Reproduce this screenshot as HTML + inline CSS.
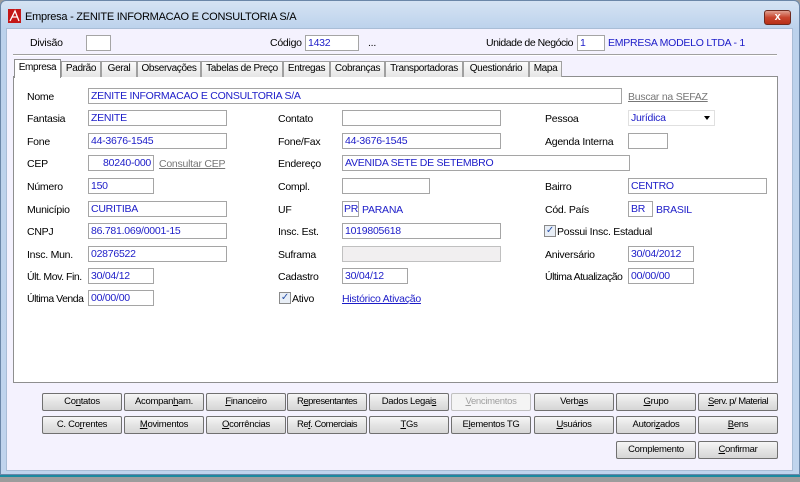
<!DOCTYPE html>
<html><head><meta charset="utf-8"><style>
*{box-sizing:border-box;margin:0;padding:0}
body{width:800px;height:482px;overflow:hidden;background:#9c9c9c;font-family:"Liberation Sans",sans-serif;font-size:10.5px;letter-spacing:-0.25px;color:#000;position:relative}
.a{position:absolute;white-space:nowrap}
.win{position:absolute;left:0;top:0;width:800px;height:475px;background:linear-gradient(#d5e3f3,#bcd2ec 28px,#c0d4ed);border:1px solid #6b87a8;border-radius:6px 6px 0 0}
.cl{position:absolute;left:6px;top:28px;width:787px;height:443px;background:#f4f2fe;border:1px solid #a9bdd6}
.in{position:absolute;height:16px;background:#fff;border:1px solid #a5a5a5;color:#1c1cc8;padding:1px 2px 0;line-height:13px;white-space:nowrap;overflow:hidden}
.lk{color:#1c1cc8}
.bt{position:absolute;width:80px;height:18px;border:1px solid #707070;border-radius:2px;background:linear-gradient(#f6f6f6,#e4e4e4 50%,#d6d6d6);font-size:9.5px;letter-spacing:-0.3px;text-align:center;line-height:16px;white-space:nowrap}
.tab{position:absolute;top:61px;height:16px;border:1px solid #a0a0a0;border-bottom:none;background:linear-gradient(#fbfbfb,#e5e5e5);font-size:10px;letter-spacing:-0.35px;line-height:14px;text-align:center;white-space:nowrap;overflow:hidden}
.cb{position:absolute;width:12px;height:12px;border:1px solid #8a8a8a;background:#e8eef6;color:#2a52a8;font-size:10px;line-height:10px;text-align:center}
</style></head><body>
<div class="win"></div>
<svg class="a" style="left:8px;top:9px" width="13" height="14"><rect width="13" height="14" fill="#c41818"/><path d="M2 12L7 2L11 12M4 8h5" stroke="#fff" stroke-width="1.3" fill="none"/></svg>
<div class="a" style="left:25px;top:11px;font-size:11px">Empresa - ZENITE INFORMACAO E CONSULTORIA S/A</div>
<div class="a" style="left:764px;top:10px;width:27px;height:15px;background:linear-gradient(#e0a090,#c8452e 50%,#b83018);border:1px solid #6e2a1e;border-radius:3px;color:#fff;font-weight:bold;text-align:center;line-height:13px;font-size:11px">x</div>
<div class="cl"></div>
<div class="a" style="left:30px;top:37px">Divisão</div><div class="in" style="left:86px;top:35px;width:25px"></div>
<div class="a" style="left:270px;top:37px">Código</div><div class="in" style="left:305px;top:35px;width:54px">1432</div>
<div class="a" style="left:368px;top:37px">...</div>
<div class="a" style="left:486px;top:37px;letter-spacing:-0.45px">Unidade de Negócio</div><div class="in" style="left:577px;top:35px;width:28px">1</div>
<div class="a lk" style="left:608px;top:37px">EMPRESA MODELO LTDA - 1</div>
<div class="a" style="left:13px;top:54px;width:764px;height:2px;border-top:1px solid #a0a0a0;border-bottom:1px solid #fff"></div>
<div class="a" style="left:13px;top:76px;width:765px;height:307px;background:#fff;border:1px solid #8e8f8f"></div>
<div class="tab" style="left:61px;width:40px">Padrão</div>
<div class="tab" style="left:101px;width:36px">Geral</div>
<div class="tab" style="left:137px;width:64px">Observações</div>
<div class="tab" style="left:201px;width:82px">Tabelas de Preço</div>
<div class="tab" style="left:283px;width:47px">Entregas</div>
<div class="tab" style="left:330px;width:55px">Cobranças</div>
<div class="tab" style="left:385px;width:78px">Transportadoras</div>
<div class="tab" style="left:463px;width:66px">Questionário</div>
<div class="tab" style="left:529px;width:33px">Mapa</div>
<div class="tab" style="left:14px;top:59px;height:19px;width:47px;background:#fff;line-height:15px;border-color:#8e8f8f">Empresa</div>

<div class="a" style="left:27px;top:91px">Nome</div><div class="in" style="left:88px;top:88px;width:534px">ZENITE INFORMACAO E CONSULTORIA S/A</div>
<div class="a" style="left:628px;top:91px;color:#777;text-decoration:underline">Buscar na SEFAZ</div>

<div class="a" style="left:27px;top:113px">Fantasia</div><div class="in" style="left:88px;top:110px;width:139px">ZENITE</div>
<div class="a" style="left:27px;top:136px">Fone</div><div class="in" style="left:88px;top:133px;width:139px">44-3676-1545</div>
<div class="a" style="left:27px;top:158px">CEP</div><div class="in" style="left:88px;top:155px;width:66px;text-align:right">80240-000</div>
<div class="a" style="left:159px;top:158px;color:#777;text-decoration:underline">Consultar CEP</div>
<div class="a" style="left:27px;top:181px">Número</div><div class="in" style="left:88px;top:178px;width:66px">150</div>
<div class="a" style="left:27px;top:204px">Município</div><div class="in" style="left:88px;top:201px;width:139px">CURITIBA</div>
<div class="a" style="left:27px;top:226px">CNPJ</div><div class="in" style="left:88px;top:223px;width:139px">86.781.069/0001-15</div>
<div class="a" style="left:27px;top:249px">Insc. Mun.</div><div class="in" style="left:88px;top:246px;width:139px">02876522</div>
<div class="a" style="left:27px;top:271px;letter-spacing:-0.45px">Últ. Mov. Fin.</div><div class="in" style="left:88px;top:268px;width:66px">30/04/12</div>
<div class="a" style="left:27px;top:293px;letter-spacing:-0.5px">Última Venda</div><div class="in" style="left:88px;top:290px;width:66px">00/00/00</div>

<div class="a" style="left:278px;top:113px">Contato</div><div class="in" style="left:342px;top:110px;width:159px"></div>
<div class="a" style="left:278px;top:136px">Fone/Fax</div><div class="in" style="left:342px;top:133px;width:159px">44-3676-1545</div>
<div class="a" style="left:278px;top:158px">Endereço</div><div class="in" style="left:342px;top:155px;width:288px">AVENIDA SETE DE SETEMBRO</div>
<div class="a" style="left:278px;top:181px">Compl.</div><div class="in" style="left:342px;top:178px;width:88px"></div>
<div class="a" style="left:278px;top:204px">UF</div><div class="in" style="left:342px;top:201px;width:17px;padding:1px 1px 0">PR</div><div class="a lk" style="left:362px;top:204px">PARANA</div>
<div class="a" style="left:278px;top:226px">Insc. Est.</div><div class="in" style="left:342px;top:223px;width:159px">1019805618</div>
<div class="a" style="left:278px;top:249px">Suframa</div><div class="in" style="left:342px;top:246px;width:159px;background:#f1eff0;border-color:#c0c0c0"></div>
<div class="a" style="left:278px;top:271px">Cadastro</div><div class="in" style="left:342px;top:268px;width:66px">30/04/12</div>
<div class="cb" style="left:279px;top:292px">✓</div><div class="a" style="left:292px;top:293px">Ativo</div>
<div class="a lk" style="left:342px;top:293px;text-decoration:underline">Histórico Ativação</div>

<div class="a" style="left:545px;top:113px">Pessoa</div><div class="in" style="left:628px;top:110px;width:87px;border-color:#e0e0e0">Jurídica</div><div class="a" style="left:704px;top:116px;width:0;height:0;border:3px solid transparent;border-top:4px solid #000;border-bottom:none"></div>
<div class="a" style="left:545px;top:136px">Agenda Interna</div><div class="in" style="left:628px;top:133px;width:40px"></div>
<div class="a" style="left:545px;top:181px">Bairro</div><div class="in" style="left:628px;top:178px;width:139px">CENTRO</div>
<div class="a" style="left:545px;top:204px">Cód. País</div><div class="in" style="left:628px;top:201px;width:25px">BR</div><div class="a lk" style="left:656px;top:204px">BRASIL</div>
<div class="cb" style="left:544px;top:225px">✓</div><div class="a" style="left:557px;top:226px">Possui Insc. Estadual</div>
<div class="a" style="left:545px;top:249px">Aniversário</div><div class="in" style="left:628px;top:246px;width:66px">30/04/2012</div>
<div class="a" style="left:545px;top:271px;letter-spacing:-0.5px">Última Atualização</div><div class="in" style="left:628px;top:268px;width:66px">00/00/00</div>

<div class="bt" style="left:42px;top:393px">Co<u>n</u>tatos</div>
<div class="bt" style="left:124px;top:393px">Acompan<u>h</u>am.</div>
<div class="bt" style="left:206px;top:393px"><u>F</u>inanceiro</div>
<div class="bt" style="left:287px;top:393px;letter-spacing:-0.5px">R<u>e</u>presentantes</div>
<div class="bt" style="left:369px;top:393px">Dados Legai<u>s</u></div>
<div class="bt" style="left:451px;top:393px;color:#a0a0a0;border-color:#c0c0c0;background:#f4f4f4"><u>V</u>encimentos</div>
<div class="bt" style="left:534px;top:393px">Verb<u>a</u>s</div>
<div class="bt" style="left:616px;top:393px"><u>G</u>rupo</div>
<div class="bt" style="left:698px;top:393px;letter-spacing:-0.5px"><u>S</u>erv. p/ Material</div>
<div class="bt" style="left:42px;top:416px">C. Co<u>r</u>rentes</div>
<div class="bt" style="left:124px;top:416px"><u>M</u>ovimentos</div>
<div class="bt" style="left:206px;top:416px"><u>O</u>corrências</div>
<div class="bt" style="left:287px;top:416px;letter-spacing:-0.5px">Re<u>f</u>. Comerciais</div>
<div class="bt" style="left:369px;top:416px"><u>T</u>Gs</div>
<div class="bt" style="left:451px;top:416px">E<u>l</u>ementos TG</div>
<div class="bt" style="left:534px;top:416px"><u>U</u>suários</div>
<div class="bt" style="left:616px;top:416px">Autori<u>z</u>ados</div>
<div class="bt" style="left:698px;top:416px"><u>B</u>ens</div>
<div class="bt" style="left:616px;top:441px">Complemento</div>
<div class="bt" style="left:698px;top:441px"><u>C</u>onfirmar</div>
<div class="a" style="left:0;top:475px;width:800px;height:2px;background:#1c8aa0"></div>
</body></html>
